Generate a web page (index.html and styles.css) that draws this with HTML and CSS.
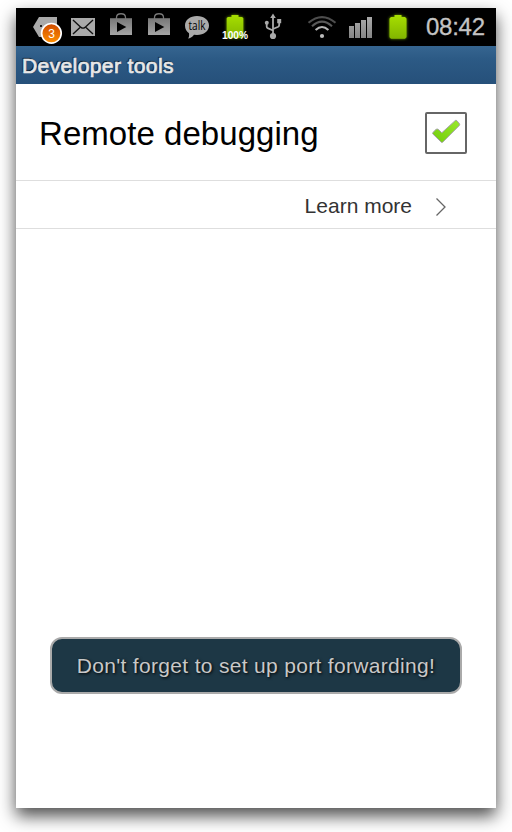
FILE: index.html
```html
<!DOCTYPE html>
<html lang="en">
<head>
<meta charset="utf-8">
<title>Developer tools</title>
<link rel="stylesheet" href="styles.css">
</head>
<body>
<main class="phone">
  <div class="status">
    <svg class="icon" viewBox="0 0 38 38"><defs><linearGradient id="orange" x2="0" y2="1"><stop stop-color="#cf4a00"/><stop offset="1" stop-color="#ff9000"/></linearGradient></defs><path d="M13 9h18v20H13L7 19z" fill="#aaa"/><path d="M14 17h2v2h-2zM20 17h2v1h-2z" fill="#222"/><circle cx="25.4" cy="25.3" r="9.8" fill="url(#orange)" stroke="#fff" stroke-width="1.7"/><text class="badge-text" x="25.7" y="29.7">3</text></svg>
    <svg class="icon" viewBox="0 0 38 38"><path d="M7 10h24v18H7z" fill="#aaa"/><path d="M9 12l8 7.4q2 1.4 4 0l8-7.4M9 26l7-6.5M29 26l-7-6.5" fill="none" stroke="#111" stroke-width="1.4"/></svg>
    <svg class="icon" viewBox="0 0 38 38"><defs><linearGradient id="grey" x2="0" y2="1"><stop stop-color="#777"/><stop offset="1" stop-color="#a5a5a5"/></linearGradient></defs><path d="M8 10.2h22V27H8z" fill="url(#grey)"/><path d="M14.5 11V9.5c0-5 9-5 9 0V11" fill="none" stroke="#777" stroke-width="1.3"/><path d="M15 14l9.3 5-9.3 5z" fill="#000"/></svg>
    <svg class="icon" viewBox="0 0 38 38"><path d="M8 10.2h22V27H8z" fill="url(#grey)"/><path d="M14.5 11V9.5c0-5 9-5 9 0V11" fill="none" stroke="#777" stroke-width="1.3"/><path d="M15 14l9.3 5-9.3 5z" fill="#000"/></svg>
    <svg class="icon" viewBox="0 0 38 38"><path d="M19 8c7 0 12 4 12 9.500s-5 9.500-12 9.500l-3-.3c-2 2.500-4 3.800-6 3.900 1.200-1.500 1.200-3.200 1-5.300C8.500 23.500 7 21 7 17.500 7 12 12 8 19 8z" fill="#aaa"/><text class="talk-text" x="19" y="22" textLength="17" lengthAdjust="spacingAndGlyphs">talk</text></svg>
    <svg class="icon" viewBox="0 0 38 38"><defs><linearGradient id="green" x2="0" y2="1"><stop stop-color="#a7df00"/><stop offset="1" stop-color="#82b500"/></linearGradient></defs><path class="glow" d="M12 9h3.500V7h7v2H26l1.300 1v20H10.700V10z" fill="url(#green)"/><text class="percent-text" x="19" y="30.800" textLength="26" lengthAdjust="spacingAndGlyphs">100%</text></svg>
    <svg class="icon" viewBox="0 0 38 38"><g fill="none" stroke="#aaa" stroke-width="1.800"><path d="M19 28V9M19 22.500l-5.300-2.300q-1-.5-1-1.700V15M19 21l5.200-2.300q1-.5 1-1.700v-3"/></g><path d="M19 5.500l2.800 4.500h-5.600zM23.200 11h4v4.200h-4z" fill="#aaa"/><circle cx="12.800" cy="14.800" r="2" fill="#aaa"/><circle cx="19" cy="28" r="3.100" fill="#aaa"/></svg>
    <svg class="icon wifi" viewBox="0 0 38 38"><g fill="none" stroke-width="2.100"><path d="M5.500 14.800Q19 3.300 32.500 14.800" stroke="#4d4d4d"/><path d="M9 18.200Q19 9 29 18.200" stroke="#595959"/><path d="M12.600 22Q19 16 25.400 22" stroke="#b5b5b5"/></g><circle cx="19" cy="28" r="2.100" fill="#bbb"/></svg>
    <svg class="icon" viewBox="0 0 38 38"><defs><linearGradient id="bars" gradientUnits="userSpaceOnUse" x1="0" y1="9" x2="0" y2="30"><stop stop-color="#aaa"/><stop offset="1" stop-color="#858585"/></linearGradient></defs><path d="M8 18h5v12H8zM14 15h5v15h-5zM20 12h5v18h-5zM26 9h5v21h-5z" fill="url(#bars)"/></svg>
    <svg class="icon" viewBox="0 0 38 38"><path class="glow" d="M12 9h3.500V7h7v2H26l1.500 1.500v18.700L26 30.700H12l-1.500-1.500V10.500z" fill="url(#green)"/></svg>
    <time class="clock">08:42</time>
  </div>
  <header class="title"><span>Developer tools</span></header>
  <section class="setting">
    <span class="setting-name">Remote debugging</span>
    <span class="checkbox"><svg viewBox="0 0 38 38"><defs><linearGradient id="tick" x1="1" x2="0" y2="1"><stop stop-color="#9ae82d"/><stop offset="1" stop-color="#72cd0c"/></linearGradient></defs><path d="M5.700 18.700l3.400-3.400q1.500-.8 3 .8l2.700 2.700L28.300 6.500q.9-.5 1.700.3l2.600 3.200q.3.900-.3 1.500L15.600 28.300q-.6.400-1.200 0l-8.600-8.400q-.4-.6-.1-1.200z" fill="url(#tick)" stroke="#a7a3ac"/></svg></span>
  </section>
  <section class="more">
    <span class="more-text">Learn more</span>
    <svg class="chevron" viewBox="0 0 12 20"><path d="M1.500 1.500L10 10l-8.500 8.500" fill="none" stroke="#666" stroke-width="1.300"/></svg>
  </section>
  <div class="content"><div class="toast"><span>Don't forget to set up port forwarding!</span></div></div>
</main>
</body>
</html>
```
FILE: styles.css
```css
body {
  margin: 0;
  padding: 8px 16px 24px;
  height: 800px;
  overflow: hidden;
  background: #fff;
  font-family: "Liberation Sans", Arial, sans-serif;
}
.phone {
  display: flex;
  flex-direction: column;
  height: 800px;
  background: #fff;
  box-shadow: 0 8px 16px rgba(0, 0, 0, .7);
}
.status {
  display: flex;
  align-items: center;
  height: 38px;
  padding: 0 10px;
  background: #000;
}
.icon { flex: none; width: 38px; height: 38px; }
.wifi { margin-left: 11px; }
.glow { filter: drop-shadow(0 0 1.5px #71a000); }
.badge-text { font-size: 12px; fill: #fff; text-anchor: middle; }
.talk-text { font: 12px "Open Sans", sans-serif; fill: #000; text-anchor: middle; }
.percent-text { font: bold 11px "Liberation Sans", sans-serif; fill: #fff; text-anchor: middle; }
.clock {
  margin-left: 9px;
  font-size: 24px;
  line-height: 40px;
  letter-spacing: -.25px;
  color: #c4c4c4;
  white-space: nowrap;
  -webkit-text-stroke: .3px #c4c4c4;
}
.title {
  height: 38px;
  padding-left: 6px;
  background: linear-gradient(#366590, #2c5a85 35%, #26507a);
  color: #e8e8e8;
  font-size: 21px;
  line-height: 39px;
  letter-spacing: .4px;
  -webkit-text-stroke: .7px #e8e8e8;
  text-shadow: -1px -1px 1px rgba(0, 0, 0, .8);
}
.setting {
  display: flex;
  align-items: center;
  justify-content: space-between;
  height: 96px;
  padding: 0 29px 0 23px;
  border-bottom: 1px solid #dedede;
}
.setting-name { font-size: 33px; letter-spacing: .05px; color: #000; padding-top: 3px; }
.checkbox {
  box-sizing: border-box;
  width: 42px;
  height: 42px;
  margin-top: 2px;
  border: 2px solid #666;
  border-radius: 2px;
}
.checkbox svg { display: block; width: 38px; height: 38px; }
.more {
  display: flex;
  align-items: center;
  justify-content: flex-end;
  height: 47px;
  padding-right: 49px;
  border-bottom: 1px solid #dedede;
}
.more-text { margin-right: 23px; color: #333; font-size: 21px; padding-top: 2px; }
.chevron { width: 12px; height: 20px; margin-top: 5px; }
.content {
  display: flex;
  flex: 1;
  flex-direction: column;
  justify-content: flex-end;
  padding: 0 34px 114px;
}
.toast {
  box-sizing: border-box;
  height: 57px;
  border: 2px solid #aaa;
  border-radius: 12px;
  background: #1d3745;
  color: #c8c8c8;
  font-size: 21px;
  line-height: 54px;
  letter-spacing: .32px;
  text-align: center;
  white-space: nowrap;
  text-shadow: 1px 1px 3px #000;
}
```
